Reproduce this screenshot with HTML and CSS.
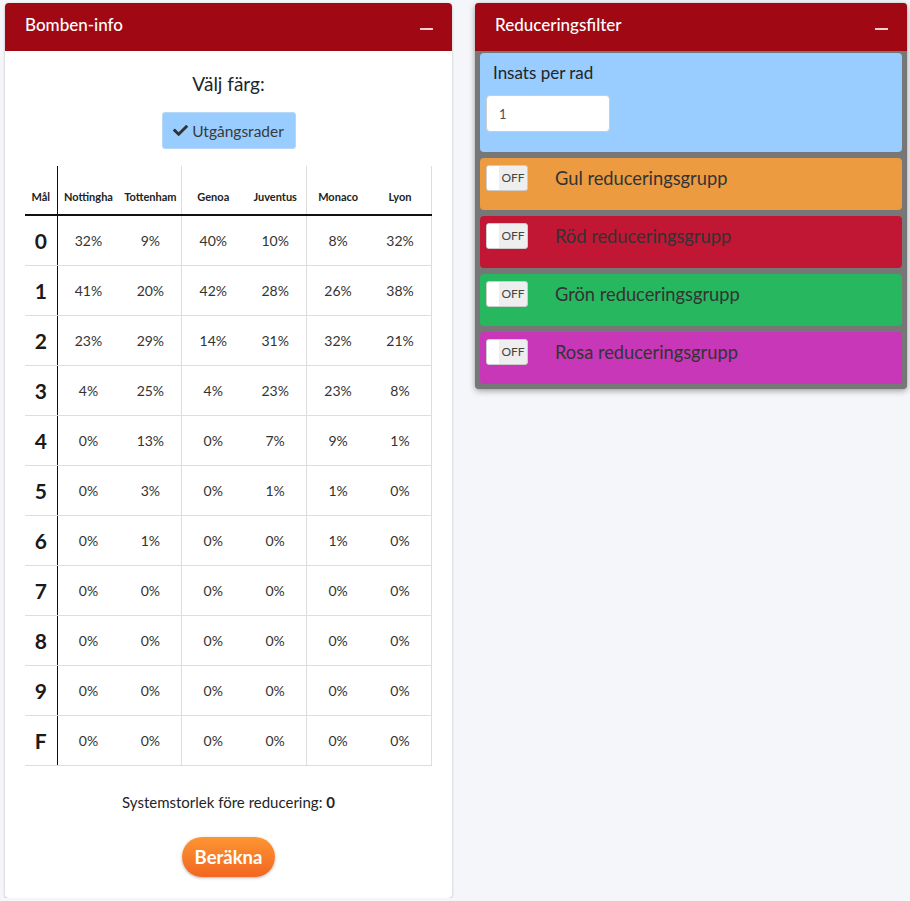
FILE: index.html
```html
<!DOCTYPE html>
<html lang="sv">
<head>
<meta charset="utf-8">
<title>Bomben</title>
<link rel="stylesheet" href="styles.css">
</head>
<body>
<div class="page">
  <section class="card card-left">
    <header class="card-header">
      <h3 class="card-title">Bomben-info</h3>
      <span class="minus"></span>
    </header>
    <div class="card-body">
      <div class="pick-title">Välj färg:</div>
      <div class="pick-row">
        <button class="btn-color">
          <svg class="check" viewBox="0 0 512 512" width="15" height="15"><path fill="#333" d="M173.9 439.4L7.5 273c-10-10-10-26.2 0-36.2l36.2-36.2c10-10 26.2-10 36.2 0L192 312.7 432.1 72.6c10-10 26.2-10 36.2 0l36.2 36.2c10 10 10 26.2 0 36.2L210.1 439.4c-10 10-26.200 10-36.2 0z"/></svg>
          Utgångsrader
        </button>
      </div>
      <table class="odds">
        <thead>
          <tr>
            <th class="lbl">Mål</th>
            <th>Nottingha</th><th class="sep">Tottenham</th>
            <th>Genoa</th><th class="sep">Juventus</th>
            <th>Monaco</th><th class="sep">Lyon</th>
          </tr>
        </thead>
        <tbody>
          <tr><th class="lbl">0</th><td>32%</td><td class="sep">9%</td><td>40%</td><td class="sep">10%</td><td>8%</td><td class="sep">32%</td></tr>
          <tr><th class="lbl">1</th><td>41%</td><td class="sep">20%</td><td>42%</td><td class="sep">28%</td><td>26%</td><td class="sep">38%</td></tr>
          <tr><th class="lbl">2</th><td>23%</td><td class="sep">29%</td><td>14%</td><td class="sep">31%</td><td>32%</td><td class="sep">21%</td></tr>
          <tr><th class="lbl">3</th><td>4%</td><td class="sep">25%</td><td>4%</td><td class="sep">23%</td><td>23%</td><td class="sep">8%</td></tr>
          <tr><th class="lbl">4</th><td>0%</td><td class="sep">13%</td><td>0%</td><td class="sep">7%</td><td>9%</td><td class="sep">1%</td></tr>
          <tr><th class="lbl">5</th><td>0%</td><td class="sep">3%</td><td>0%</td><td class="sep">1%</td><td>1%</td><td class="sep">0%</td></tr>
          <tr><th class="lbl">6</th><td>0%</td><td class="sep">1%</td><td>0%</td><td class="sep">0%</td><td>1%</td><td class="sep">0%</td></tr>
          <tr><th class="lbl">7</th><td>0%</td><td class="sep">0%</td><td>0%</td><td class="sep">0%</td><td>0%</td><td class="sep">0%</td></tr>
          <tr><th class="lbl">8</th><td>0%</td><td class="sep">0%</td><td>0%</td><td class="sep">0%</td><td>0%</td><td class="sep">0%</td></tr>
          <tr><th class="lbl">9</th><td>0%</td><td class="sep">0%</td><td>0%</td><td class="sep">0%</td><td>0%</td><td class="sep">0%</td></tr>
          <tr><th class="lbl">F</th><td>0%</td><td class="sep">0%</td><td>0%</td><td class="sep">0%</td><td>0%</td><td class="sep">0%</td></tr>
        </tbody>
      </table>
      <p class="sysize">Systemstorlek före reducering: <b>0</b></p>
      <div class="calc-row"><button class="btn-calc">Beräkna</button></div>
    </div>
  </section>

  <section class="card card-right">
    <header class="card-header">
      <h3 class="card-title">Reduceringsfilter</h3>
      <span class="minus"></span>
    </header>
    <div class="filter-body">
      <div class="box box-blue">
        <div class="insats-label">Insats per rad</div>
        <input class="insats-input" type="text" value="1">
      </div>
      <div class="box box-group box-orange">
        <span class="toggle"><span class="knob"></span><span class="off">OFF</span></span>
        <span class="group-label">Gul reduceringsgrupp</span>
      </div>
      <div class="box box-group box-red">
        <span class="toggle"><span class="knob"></span><span class="off">OFF</span></span>
        <span class="group-label">Röd reduceringsgrupp</span>
      </div>
      <div class="box box-group box-green">
        <span class="toggle"><span class="knob"></span><span class="off">OFF</span></span>
        <span class="group-label">Grön reduceringsgrupp</span>
      </div>
      <div class="box box-group box-pink">
        <span class="toggle"><span class="knob"></span><span class="off">OFF</span></span>
        <span class="group-label">Rosa reduceringsgrupp</span>
      </div>
    </div>
  </section>
</div>
</body>
</html>
```

FILE: styles.css
```css
* { box-sizing: border-box; }
html, body { margin: 0; padding: 0; }
body {
  background: #f4f6f9;
  font-family: Lato, "Noto Sans", "Liberation Sans", sans-serif;
  color: #212529;
}
.page {
  display: flex;
  align-items: flex-start;
  gap: 23px;
  padding: 3px 3px 0 5px;
}
.card {
  background: #fff;
  border-radius: 4px;
  box-shadow: 0 0 1px rgba(0,0,0,.125), 0 1px 3px rgba(0,0,0,.2);
  overflow: hidden;
}
.card-left { width: 447px; }
.card-right { width: 432px; background: #777; box-shadow: 0 0 1px rgba(0,0,0,.2), 0 2px 6px rgba(0,0,0,.35); }
.card-header {
  background: #a00814;
  height: 48px;
  display: flex;
  align-items: center;
  justify-content: space-between;
  padding: 0 19px 5px 20px;
}
.card-title {
  margin: 0;
  color: #fff;
  font-size: 17px;
  font-weight: 500;
}
.minus {
  width: 13px;
  height: 2px;
  background: #f3d0d3;
  margin-top: 8px;
}
.card-body {
  padding: 21px 20px 21px 20px;
}
.pick-title {
  text-align: center;
  font-size: 19px;
  color: #212529;
  line-height: 24px;
}
.pick-row { display: flex; justify-content: center; margin-top: 16px; }
.btn-color {
  background: #99ccff;
  border: 1px solid #b5d6f5;
  border-radius: 3px;
  width: 134px;
  height: 37px;
  font-family: inherit;
  font-size: 15.5px;
  color: #3a3a3a;
  display: flex;
  align-items: center;
  justify-content: center;
  gap: 4px;
  padding: 0;
}
.check { display: block; }
.odds {
  margin-top: 17px;
  width: 407px;
  border-collapse: collapse;
  table-layout: fixed;
  color: #333;
}
.odds th, .odds td {
  text-align: center;
  padding: 0;
  height: 50px;
  border-bottom: 1px solid #ddd;
}
.odds thead th {
  font-size: 11px;
  font-weight: 700;
  height: 49px;
  color: #222;
  border-bottom: 2px solid #111;
  padding-top: 12px;
  white-space: nowrap;
  overflow: hidden;
}
.odds th.lbl { width: 32px; border-right: 1px solid #111; }
.odds tbody th.lbl { font-size: 21px; font-weight: 700; color: #1a1a1a; }
.odds td { font-size: 14px; color: #333; }
.odds .sep { border-right: 1px solid #ddd; }
.sysize {
  text-align: center;
  font-size: 15px;
  margin: 27px 0 0;
  color: #212529;
}
.calc-row { display: flex; justify-content: center; margin-top: 26px; }
.btn-calc {
  width: 93px;
  height: 40px;
  border: none;
  border-radius: 20px;
  background: linear-gradient(#fd9532, #f26622);
  color: #fff;
  font-family: inherit;
  font-size: 18.5px;
  font-weight: 700;
  box-shadow: 0 1px 3px rgba(0,0,0,.3);
  padding: 0;
}
.filter-body {
  padding: 2px 5px 5px 5px;
  display: flex;
  flex-direction: column;
  gap: 6px;
}
.box {
  border-radius: 4px;
}
.box-blue {
  background: #99ccff;
  height: 99px;
  padding: 9px 6px 0 6px;
}
.insats-label {
  font-size: 17px;
  padding-left: 7px;
  line-height: 22px;
  color: #212529;
}
.insats-input {
  display: block;
  margin-top: 11px;
  width: 124px;
  height: 37px;
  border: 1px solid #ccc;
  border-radius: 4px;
  background: #fff;
  font-family: inherit;
  font-size: 13px;
  padding: 0 12px;
  color: #495057;
}
.box-group {
  height: 52px;
  display: flex;
  align-items: flex-start;
  padding: 7px 6px 0 6px;
}
.box-orange { background: #ec9b40; }
.box-red { background: #c11634; }
.box-green { background: #27b75f; }
.box-pink { background: #c837b8; }
.toggle {
  width: 42px;
  height: 26px;
  border: 1px solid #ccc;
  border-radius: 3px;
  background: #eee;
  display: flex;
  overflow: hidden;
}
.knob { width: 12px; background: #fff; }
.off {
  flex: 1;
  font-size: 12px;
  line-height: 24px;
  text-align: center;
  color: #444;
}
.group-label {
  margin-left: 27px;
  font-size: 18.3px;
  line-height: 26px;
  color: #333;
}
```
